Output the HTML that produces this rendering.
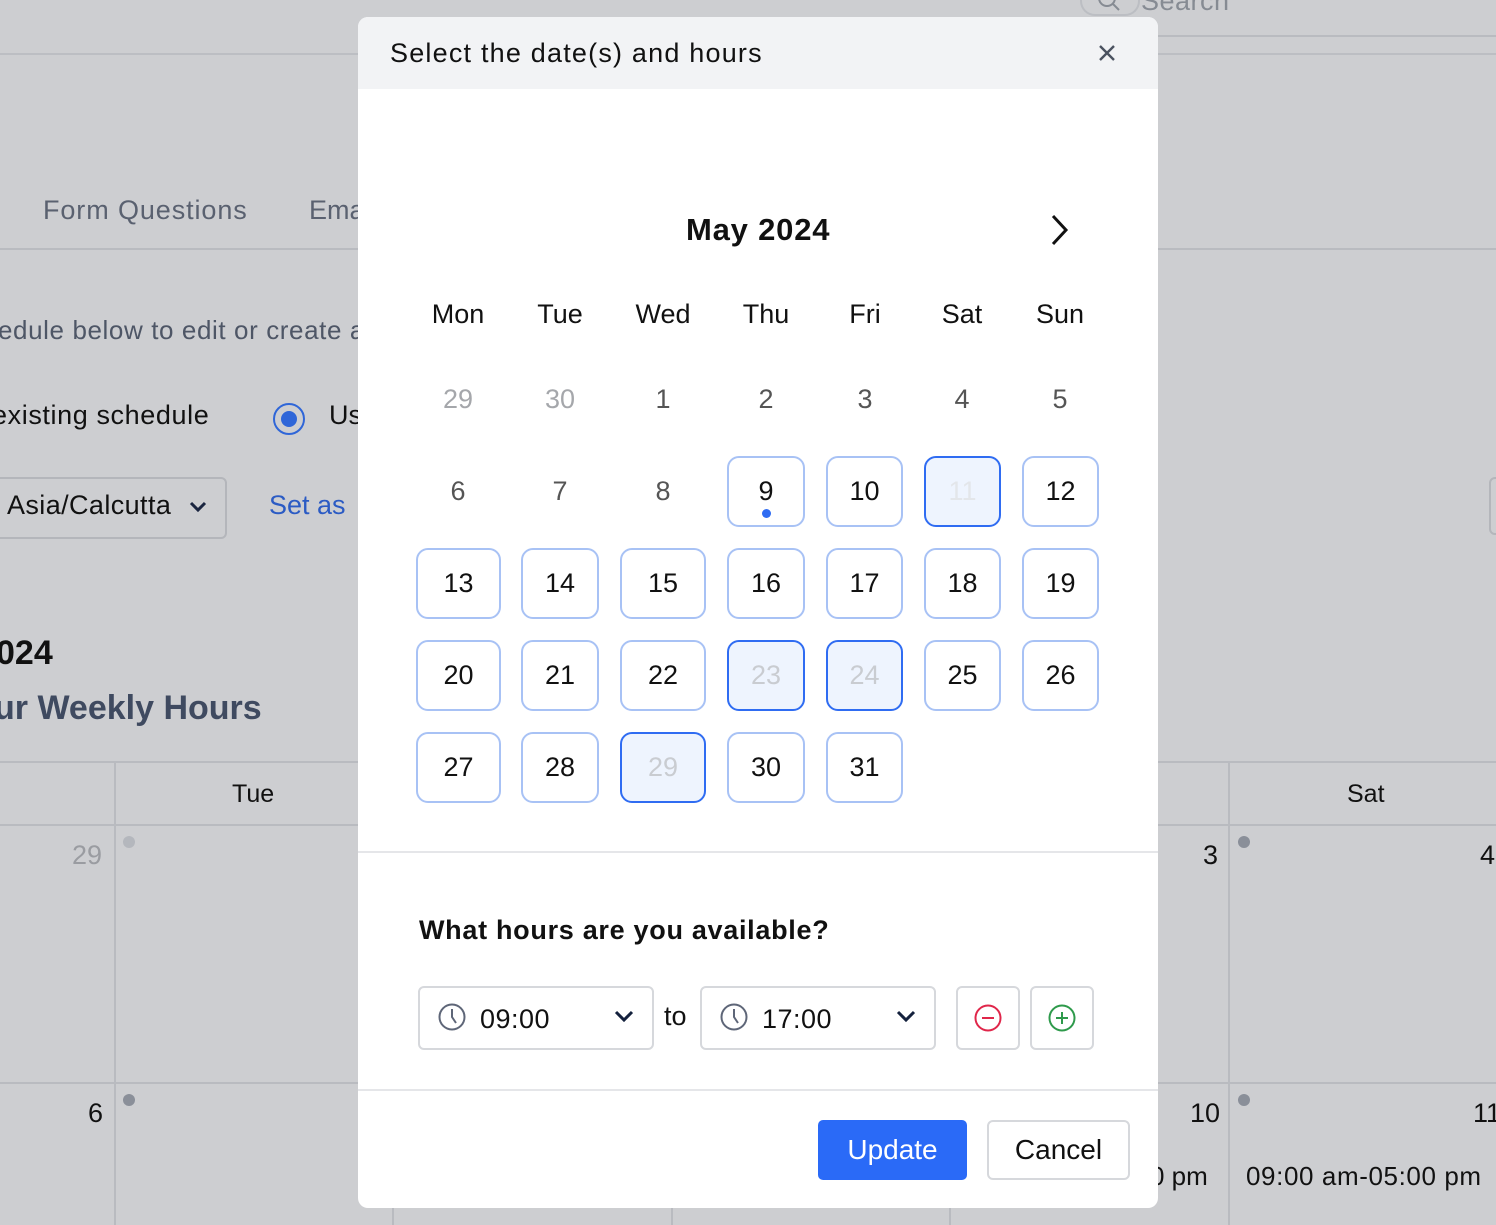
<!DOCTYPE html>
<html><head><meta charset="utf-8"><style>
*{box-sizing:border-box;margin:0;padding:0}
body{width:1496px;height:1225px;overflow:hidden;position:relative;background:#cdced1;font-family:"Liberation Sans",Arial,sans-serif;color:#111}
.a{position:absolute;white-space:nowrap}
.hl{position:absolute;height:2px;background:#b9bbc0}
.vl{position:absolute;width:2px;background:#b9bbc0}
.modal{position:absolute;left:358px;top:17px;width:800px;height:1191px;background:#fff;border-radius:10px;overflow:hidden}
.cell{position:absolute;height:71px;border:2px solid #a8c2f5;border-radius:12px;font-size:27px;display:flex;align-items:center;justify-content:center;background:#fff}
.sel{border-color:#2f6cf2;background:#eef4fe;color:#e3e6ea}
.dn{position:absolute;font-size:27px;color:#555;width:80px;text-align:center}
.box{position:absolute;border:2px solid #d6d8dc;border-radius:6px;background:#fff}
</style></head><body>
<div class="hl" style="left:0;top:53px;width:1496px;background:#bcbec3"></div>
<div class="hl" style="left:1158px;top:35px;width:338px"></div>
<div class="a" style="left:1080px;top:-14px;width:60px;height:30px;border:2px solid #bcbec3;border-radius:16px;border-top:none"></div>
<div class="a" style="left:1141px;top:-14px;font-size:27px;color:#868b93;letter-spacing:0.5px">Search</div>
<svg class="a" style="left:1097px;top:-6px" width="28" height="22"><circle cx="10" cy="4" r="8" fill="none" stroke="#868b93" stroke-width="2"/><line x1="16" y1="10" x2="22" y2="16" stroke="#868b93" stroke-width="2"/></svg>
<div class="a" style="left:43px;top:195px;font-size:27px;color:#5a6170;letter-spacing:0.9px">Form Questions</div>
<div class="a" style="left:309px;top:195px;font-size:27px;color:#5a6170">Email</div>
<div class="hl" style="left:0;top:248px;width:1496px"></div>
<div class="a" style="left:-2px;top:315px;font-size:26px;color:#4e5666;letter-spacing:0.6px">edule below to edit or create a</div>
<div class="a" style="left:-8px;top:400px;font-size:27px;color:#111;letter-spacing:0.6px">existing schedule</div>
<div class="a" style="left:273px;top:403px;width:32px;height:32px;border:2px solid #2f66d8;border-radius:50%"></div>
<div class="a" style="left:281px;top:411px;width:16px;height:16px;background:#2f66d8;border-radius:50%"></div>
<div class="a" style="left:329px;top:400px;font-size:27px">Us</div>
<div class="a" style="left:-10px;top:477px;width:237px;height:62px;border:2px solid #b4b6bb;border-radius:6px"></div>
<div class="a" style="left:7px;top:490px;font-size:27px;letter-spacing:0.4px">Asia/Calcutta</div>
<svg class="a" style="left:188px;top:500px" width="20" height="14"><path d="M3 3l7 7 7-7" fill="none" stroke="#1a2540" stroke-width="3"/></svg>
<div class="a" style="left:269px;top:490px;font-size:27px;color:#2b5bc4">Set as</div>
<div class="a" style="left:1489px;top:477px;width:20px;height:58px;border:2px solid #b4b6bb;border-radius:6px"></div>
<div class="a" style="left:-4px;top:634px;font-size:34px;font-weight:bold">024</div>
<div class="a" style="left:-6px;top:689px;font-size:34px;font-weight:bold;color:#3f4a60">ur Weekly Hours</div>
<div class="hl" style="left:0;top:761px;width:1496px"></div>
<div class="hl" style="left:0;top:824px;width:1496px"></div>
<div class="hl" style="left:0;top:1082px;width:1496px"></div>
<div class="vl" style="left:114px;top:762px;height:463px"></div>
<div class="vl" style="left:392px;top:762px;height:463px"></div>
<div class="vl" style="left:671px;top:762px;height:463px"></div>
<div class="vl" style="left:949px;top:762px;height:463px"></div>
<div class="vl" style="left:1228px;top:762px;height:463px"></div>
<div class="a" style="left:232px;top:780px;font-size:25px">Tue</div>
<div class="a" style="left:1347px;top:780px;font-size:25px">Sat</div>
<div class="a" style="left:72px;top:840px;font-size:27px;color:#9a9ca1">29</div>
<div class="a" style="left:123px;top:836px;width:12px;height:12px;border-radius:50%;background:#b4b7bd"></div>
<div class="a" style="left:123px;top:1094px;width:12px;height:12px;border-radius:50%;background:#8a8f99"></div>
<div class="a" style="left:88px;top:1098px;font-size:27px">6</div>
<div class="a" style="left:1203px;top:840px;font-size:27px">3</div>
<div class="a" style="left:1238px;top:836px;width:12px;height:12px;border-radius:50%;background:#8a8f99"></div>
<div class="a" style="left:1238px;top:1094px;width:12px;height:12px;border-radius:50%;background:#8a8f99"></div>
<div class="a" style="left:1480px;top:840px;font-size:27px">4</div>
<div class="a" style="left:1190px;top:1098px;font-size:27px">10</div>
<div class="a" style="left:1473px;top:1098px;font-size:27px">11</div>
<div class="a" style="left:1150px;top:1161px;font-size:26px">0 pm</div>
<div class="a" style="left:1246px;top:1161px;font-size:26px;letter-spacing:0.6px">09:00 am-05:00 pm</div>

<div class="modal">
 <div style="position:absolute;left:0;top:0;width:800px;height:72px;background:#f2f3f5"></div>
 <div class="a" style="left:32px;top:21px;font-size:27px;color:#111;letter-spacing:1.2px">Select the date(s) and hours</div>
 <svg class="a" style="left:740px;top:27px" width="18" height="18"><path d="M2 2l14 14M16 2L2 16" stroke="#4b5260" stroke-width="2.4"/></svg>
 <div class="a" style="left:328px;top:195px;font-size:31px;font-weight:bold;letter-spacing:0.8px">May 2024</div>
 <svg class="a" style="left:690px;top:196px" width="24" height="34"><path d="M5 3l13 14L5 31" fill="none" stroke="#111" stroke-width="3"/></svg>
 <div class="dn" style="left:60px;top:282px;color:#111">Mon</div>
 <div class="dn" style="left:162px;top:282px;color:#111">Tue</div>
 <div class="dn" style="left:265px;top:282px;color:#111">Wed</div>
 <div class="dn" style="left:368px;top:282px;color:#111">Thu</div>
 <div class="dn" style="left:467px;top:282px;color:#111">Fri</div>
 <div class="dn" style="left:564px;top:282px;color:#111">Sat</div>
 <div class="dn" style="left:662px;top:282px;color:#111">Sun</div>
 <div class="dn" style="left:60px;top:367px;color:#a5a7ab">29</div>
 <div class="dn" style="left:162px;top:367px;color:#a5a7ab">30</div>
 <div class="dn" style="left:265px;top:367px">1</div>
 <div class="dn" style="left:368px;top:367px">2</div>
 <div class="dn" style="left:467px;top:367px">3</div>
 <div class="dn" style="left:564px;top:367px">4</div>
 <div class="dn" style="left:662px;top:367px">5</div>
 <div class="dn" style="left:60px;top:459px">6</div>
 <div class="dn" style="left:162px;top:459px">7</div>
 <div class="dn" style="left:265px;top:459px">8</div>
 <div class="cell" style="left:369px;top:439px;width:78px">9</div>
 <div class="a" style="left:404px;top:492px;width:9px;height:9px;border-radius:50%;background:#2f6cf2"></div>
 <div class="cell" style="left:468px;top:439px;width:77px">10</div>
 <div class="cell sel" style="left:566px;top:439px;width:77px">11</div>
 <div class="cell" style="left:664px;top:439px;width:77px">12</div>

 <div class="cell" style="left:58px;top:531px;width:85px">13</div>
 <div class="cell" style="left:163px;top:531px;width:78px">14</div>
 <div class="cell" style="left:262px;top:531px;width:86px">15</div>
 <div class="cell" style="left:369px;top:531px;width:78px">16</div>
 <div class="cell" style="left:468px;top:531px;width:77px">17</div>
 <div class="cell" style="left:566px;top:531px;width:77px">18</div>
 <div class="cell" style="left:664px;top:531px;width:77px">19</div>

 <div class="cell" style="left:58px;top:623px;width:85px">20</div>
 <div class="cell" style="left:163px;top:623px;width:78px">21</div>
 <div class="cell" style="left:262px;top:623px;width:86px">22</div>
 <div class="cell sel" style="left:369px;top:623px;width:78px;color:#c9ccd1">23</div>
 <div class="cell sel" style="left:468px;top:623px;width:77px;color:#c9ccd1">24</div>
 <div class="cell" style="left:566px;top:623px;width:77px">25</div>
 <div class="cell" style="left:664px;top:623px;width:77px">26</div>

 <div class="cell" style="left:58px;top:715px;width:85px">27</div>
 <div class="cell" style="left:163px;top:715px;width:78px">28</div>
 <div class="cell sel" style="left:262px;top:715px;width:86px;color:#c9ccd1">29</div>
 <div class="cell" style="left:369px;top:715px;width:78px">30</div>
 <div class="cell" style="left:468px;top:715px;width:77px">31</div>

 <div class="a" style="left:0;top:834px;width:800px;height:2px;background:#e5e6e9"></div>
 <div class="a" style="left:61px;top:898px;font-size:27px;font-weight:bold;letter-spacing:0.7px">What hours are you available?</div>
 <div class="box" style="left:60px;top:969px;width:236px;height:64px"></div>
 <svg class="a" style="left:79px;top:985px" width="30" height="30"><circle cx="15" cy="15" r="12.5" fill="none" stroke="#5e6678" stroke-width="2"/><path d="M15 7v8l4 6" fill="none" stroke="#5e6678" stroke-width="2"/></svg>
 <div class="a" style="left:122px;top:987px;font-size:27px;letter-spacing:0.5px">09:00</div>
 <svg class="a" style="left:255px;top:992px" width="22" height="16"><path d="M3 3l8 8 8-8" fill="none" stroke="#14213d" stroke-width="3"/></svg>
 <div class="a" style="left:306px;top:984px;font-size:27px">to</div>
 <div class="box" style="left:342px;top:969px;width:236px;height:64px"></div>
 <svg class="a" style="left:361px;top:985px" width="30" height="30"><circle cx="15" cy="15" r="12.5" fill="none" stroke="#5e6678" stroke-width="2"/><path d="M15 7v8l4 6" fill="none" stroke="#5e6678" stroke-width="2"/></svg>
 <div class="a" style="left:404px;top:987px;font-size:27px;letter-spacing:0.5px">17:00</div>
 <svg class="a" style="left:537px;top:992px" width="22" height="16"><path d="M3 3l8 8 8-8" fill="none" stroke="#14213d" stroke-width="3"/></svg>
 <div class="box" style="left:598px;top:969px;width:64px;height:64px"></div>
 <svg class="a" style="left:615px;top:986px" width="30" height="30"><circle cx="15" cy="15" r="12.5" fill="none" stroke="#e0264a" stroke-width="2"/><path d="M9 15h12" stroke="#e0264a" stroke-width="2"/></svg>
 <div class="box" style="left:672px;top:969px;width:64px;height:64px"></div>
 <svg class="a" style="left:689px;top:986px" width="30" height="30"><circle cx="15" cy="15" r="12.5" fill="none" stroke="#2e9a4b" stroke-width="2"/><path d="M9 15h12M15 9v12" stroke="#2e9a4b" stroke-width="2"/></svg>
 <div class="a" style="left:0;top:1072px;width:800px;height:2px;background:#e5e6e9"></div>
 <div class="a" style="left:460px;top:1103px;width:149px;height:60px;background:#2a6af7;border-radius:5px;color:#fff;font-size:28px;display:flex;align-items:center;justify-content:center">Update</div>
 <div class="box" style="left:629px;top:1103px;width:143px;height:60px;display:flex;align-items:center;justify-content:center;font-size:28px">Cancel</div>
</div>
</body></html>
